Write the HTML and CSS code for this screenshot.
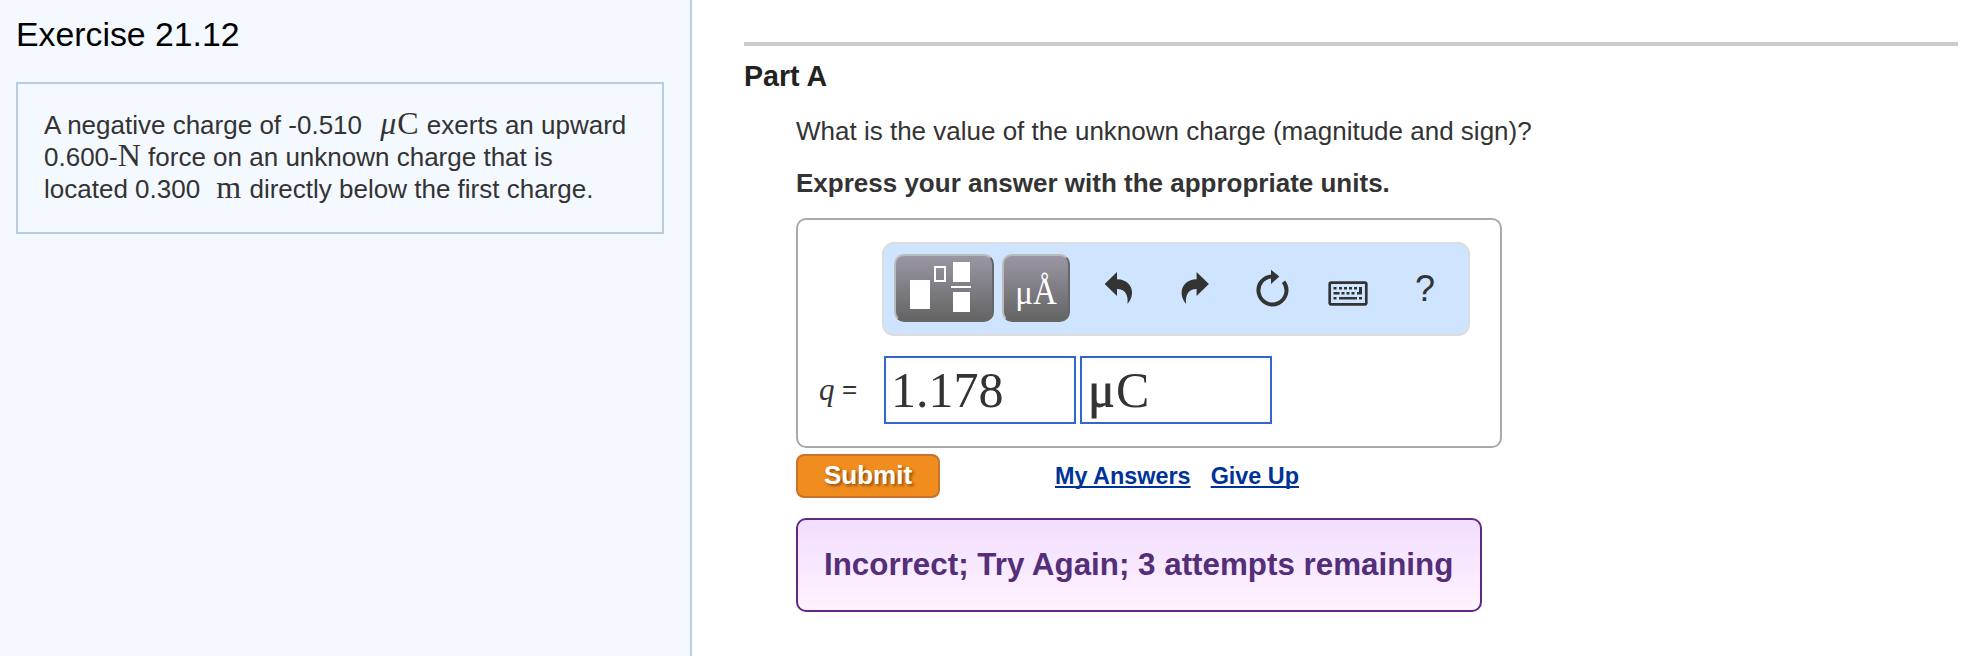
FILE: index.html
```html
<!DOCTYPE html>
<html lang="en">
<head>
<meta charset="utf-8">
<title>Exercise 21.12</title>
<link rel="stylesheet" href="styles.css">
</head>
<body>
<div class="layout">
  <aside class="sidebar">
    <h1 class="title">Exercise 21.12</h1>
    <div class="problem">A negative charge of -0.510 <span class="math mu-c"><i>μ</i>C</span> exerts an upward<br>0.600-<span class="math">N</span> force on an unknown charge that is<br>located 0.300 <span class="math meter">m</span> directly below the first charge.</div>
  </aside>
  <main class="content">
    <h2 class="part-title">Part A</h2>
    <div class="part-body">
      <p class="question">What is the value of the unknown charge (magnitude and sign)?</p>
      <p class="instruction">Express your answer with the appropriate units.</p>
      <section class="answer">
        <div class="toolbar">
          <button class="tool template" aria-label="Templates">
            <svg width="96" height="64" viewBox="0 0 96 64" fill="#fff"><path d="M14 24h20v29H14zM57 6h17v20H57zM57 36h17v20H57zM55 30h20v2H55z"/><path d="M39 11h10v14H39z" fill="none" stroke="#fff" stroke-width="2"/></svg>
          </button>
          <button class="tool symbols"><span>μ</span><span class="angstrom">Å</span></button>
          <svg class="icons" width="300" height="68" viewBox="0 0 300 68" fill="#333">
            <path d="M14.700 30 27 18v7.300C37 25.300 42 32 42 38.500 42 44 39.500 47.500 37.500 49.800 38.500 41 35 35 27 35v7z"/>
            <path d="M118.900 30 106.600 18v7.300C96.600 25.300 91.600 32 91.600 38.500 91.600 44 94.100 47.500 96.100 49.800 95.100 41 98.600 35 106.600 35v7z"/>
            <path d="M182.500 22.400A14 14 0 1 0 193.500 27.800" fill="none" stroke="#333" stroke-width="4"/>
            <path d="M181 15.800 189.300 22.500 181 30z"/>
            <rect x="239.700" y="28.700" width="36.600" height="21.600" rx="1.500" fill="none" stroke="#333" stroke-width="2.700"/>
            <path d="M243.500 33h3v2.500h-3zm5.500 0h3v2.500h-3zm5 0h3v2.500h-3zm5 0h3v2.500h-3zm5 0h3v2.500h-3zM269 33h3v7.500h-5V38h2zM243.500 38h6v2.500h-6zm8 0h3v2.500h-3zm5 0h3v2.500h-3zm5 0h3v2.500h-3zM243.500 43h3v2.500h-3zm5.500 0h18v2.500h-18zm20 0h3v2.500h-3z"/>
          </svg>
          <span class="help">?</span>
        </div>
        <div class="equation">
          <span class="lhs"><i>q</i><span>=</span></span>
          <div class="field">1.178</div>
          <div class="field unit"><span class="mu">μ</span>C</div>
        </div>
      </section>
      <div class="actions">
        <button class="submit">Submit</button>
        <a class="link" href="#">My Answers</a>
        <a class="link" href="#">Give Up</a>
      </div>
      <div class="feedback">Incorrect; Try Again; 3 attempts remaining</div>
    </div>
  </main>
</div>
</body>
</html>
```
FILE: styles.css
```css
* { box-sizing: border-box; }
body {
  margin: 0;
  background: #fff;
  color: #333;
  font: 26px/32px "Liberation Sans", Arial, sans-serif;
}
h1, h2, p { margin: 0; }
.layout { display: flex; height: 656px; overflow: hidden; }
.sidebar {
  width: 692px;
  flex: none;
  padding: 14px 26px 0 16px;
  background: #f4f8ff;
  border-right: 2px solid #b9cde0;
}
.title { color: #000; font-size: 33.8px; line-height: 40px; font-weight: 400; }
.problem {
  margin-top: 28px;
  height: 152px;
  padding: 25px 0 0 26px;
  border: 2px solid #b9cde0;
  white-space: nowrap;
}
.math { font-family: "Liberation Serif", "Times New Roman", serif; font-size: 32px; line-height: 0; }
.mu-c { margin-left: 11px; letter-spacing: 1px; }
.meter { margin: 0 1px 0 9px; }
.content { flex: 1; padding: 42px 18px 0 52px; }
.part-title {
  padding-top: 14px;
  border-top: 4px solid #ccc;
  color: #222;
  font-size: 28.600px;
  line-height: 32px;
}
.part-body { padding-left: 52px; }
.question { margin-top: 23px; white-space: nowrap; }
.instruction { margin-top: 20px; font-weight: 700; }
.answer {
  width: 706px;
  height: 230px;
  margin-top: 19px;
  padding: 22px 0 0 84px;
  border: 2px solid #aaa;
  border-radius: 10px;
}
.toolbar {
  display: flex;
  width: 588px;
  height: 94px;
  padding: 10px;
  border: 2px solid #ddd;
  border-radius: 12px;
  background: #cfe5ff;
}
.tool {
  height: 68px;
  margin: 0 8px 0 0;
  padding: 0;
  border: 2px solid;
  border-color: #bbb #666 #666 #bbb;
  border-radius: 10px;
  background: linear-gradient(#9a97a3, #646464);
  color: #fff;
}
.tool svg { display: block; }
.template { width: 100px; }
.symbols {
  display: flex;
  align-items: baseline;
  justify-content: center;
  width: 68px;
  padding-top: 18px;
  font: 33px/38px "Liberation Serif", serif;
}
.angstrom { transform: scaleY(1.15); transform-origin: 50% 78%; }
.icons { margin-left: 12px; flex: none; }
.help { margin-left: 25px; font-size: 36px; line-height: 70px; }
.equation { display: flex; gap: 4px; margin: 20px 0 0 -63px; }
.lhs { display: flex; width: 61px; line-height: 66px; }
.lhs i { width: 23px; font: italic 31px/68px "Liberation Serif", serif; }
.field {
  width: 192px;
  height: 68px;
  padding-left: 5px;
  border: 2px solid #36c;
  font: 50px/64px "Liberation Serif", serif;
}
.unit { padding-left: 6px; }
.mu { display: inline-block; width: 28px; -webkit-text-stroke: 0.800px #333; }
.actions { display: flex; align-items: flex-start; margin-top: 6px; }
.submit {
  width: 144px;
  height: 44px;
  margin: 0 115px 0 0;
  padding: 0 0 2px;
  border: 2px solid #c9722c;
  border-radius: 8px;
  background: #f08d1e;
  color: #fff;
  font: 700 26px/36px "Liberation Sans", Arial, sans-serif;
  text-shadow: 2px 2px 3px rgba(90, 40, 0, .6);
}
.link {
  margin-right: 20px;
  color: #039;
  font-size: 23.400px;
  line-height: 44px;
  font-weight: 700;
  text-decoration: underline;
  text-decoration-thickness: 2px;
  text-underline-offset: 2px;
  text-decoration-skip-ink: none;
}
.feedback {
  width: 686px;
  height: 94px;
  margin-top: 20px;
  padding-left: 26px;
  border: 2px solid #642880;
  border-radius: 10px;
  background: linear-gradient(#f1ddff, #fff3ff);
  color: #542e78;
  font-size: 31.350px;
  font-weight: 700;
  line-height: 90px;
  white-space: nowrap;
}
```
